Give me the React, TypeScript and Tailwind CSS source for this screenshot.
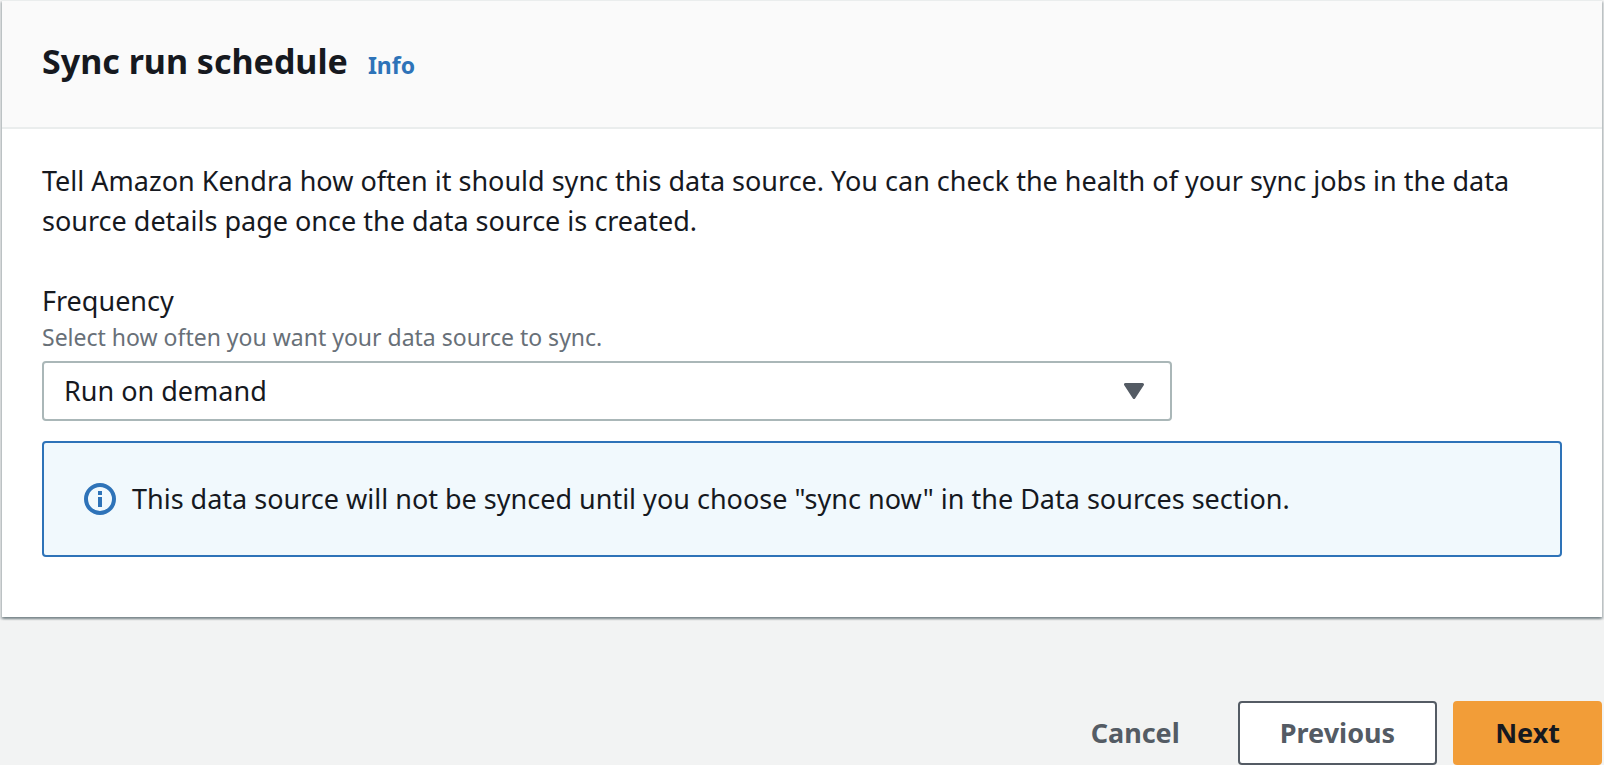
import { useState } from 'react'

const frequencies = ['Run on demand', 'Hourly', 'Daily', 'Weekly', 'Monthly', 'Custom']

function InfoIcon() {
  return (
    <svg className="w-8 h-8 shrink-0" viewBox="0 0 32 32" fill="none" aria-hidden="true">
      <circle cx="16" cy="16" r="14" stroke="#2e73b8" strokeWidth="4" />
      <path d="M14 8h4v4h-4zM14 14h4v10h-4z" fill="#2e73b8" />
    </svg>
  )
}

function CaretDown() {
  return (
    <svg
      className="absolute right-7 top-[22px] w-5 h-4 pointer-events-none"
      viewBox="0 0 20 16"
      aria-hidden="true"
    >
      <path d="M1.5 1.5h17L10 14.5z" fill="#545b64" stroke="#545b64" strokeWidth="3" strokeLinejoin="round" />
    </svg>
  )
}

export default function App() {
  const [frequency, setFrequency] = useState(frequencies[0])

  return (
    <div className="min-h-screen px-0.5 bg-[#f2f3f3] text-[#16191f] font-['Noto_Sans',sans-serif] text-[27px] leading-10">
      <section className="bg-white border-t border-[#eaeded] shadow-[0_2px_2px_0_rgba(0,28,36,0.3),2px_2px_2px_0_rgba(0,28,36,0.15),-2px_2px_2px_0_rgba(0,28,36,0.15)]">
        <header className="flex items-baseline gap-5 px-10 pt-[38px] pb-11 bg-[#fafafa] border-b-2 border-[#eaeded]">
          <h2 className="text-[34px] leading-[44px] font-bold">Sync run schedule</h2>
          <a href="#info" className="text-[23px] leading-8 font-bold text-[#2e73b8]">Info</a>
        </header>

        <div className="px-10 pt-8 pb-[60px]">
          <p>
            Tell Amazon Kendra how often it should sync this data source. You can check the health of your
            sync jobs in the data source details page once the data source is created.
          </p>

          <div className="mt-10">
            <label htmlFor="frequency" className="block">Frequency</label>
            <p id="frequency-hint" className="text-[23px] leading-8 text-[#687078]">
              Select how often you want your data source to sync.
            </p>
            <div className="relative mt-2 w-[calc(75%-10px)]">
              <select
                id="frequency"
                aria-describedby="frequency-hint"
                value={frequency}
                onChange={(e) => setFrequency(e.target.value)}
                className="block w-full h-15 pl-5 pr-16 appearance-none bg-white border-2 border-[#aab7b8] rounded"
              >
                {frequencies.map((f) => (
                  <option key={f}>{f}</option>
                ))}
              </select>
              <CaretDown />
            </div>
          </div>

          <div className="flex items-center gap-4 mt-5 px-10 py-9 bg-[#f1f9fd] border-2 border-[#2e73b8] rounded">
            <InfoIcon />
            <p>This data source will not be synced until you choose "sync now" in the Data sources section.</p>
          </div>
        </div>
      </section>

      <div className="flex justify-end gap-4 mt-21 font-bold">
        <button type="button" className="h-16 px-10 border-2 border-transparent rounded text-[#545b64]">Cancel</button>
        <button type="button" className="h-16 px-10 bg-white border-2 border-[#545b64] rounded text-[#545b64]">Previous</button>
        <button type="button" className="h-16 px-10 bg-[#f29d38] border-2 border-[#f29d38] rounded">Next</button>
      </div>
    </div>
  )
}
